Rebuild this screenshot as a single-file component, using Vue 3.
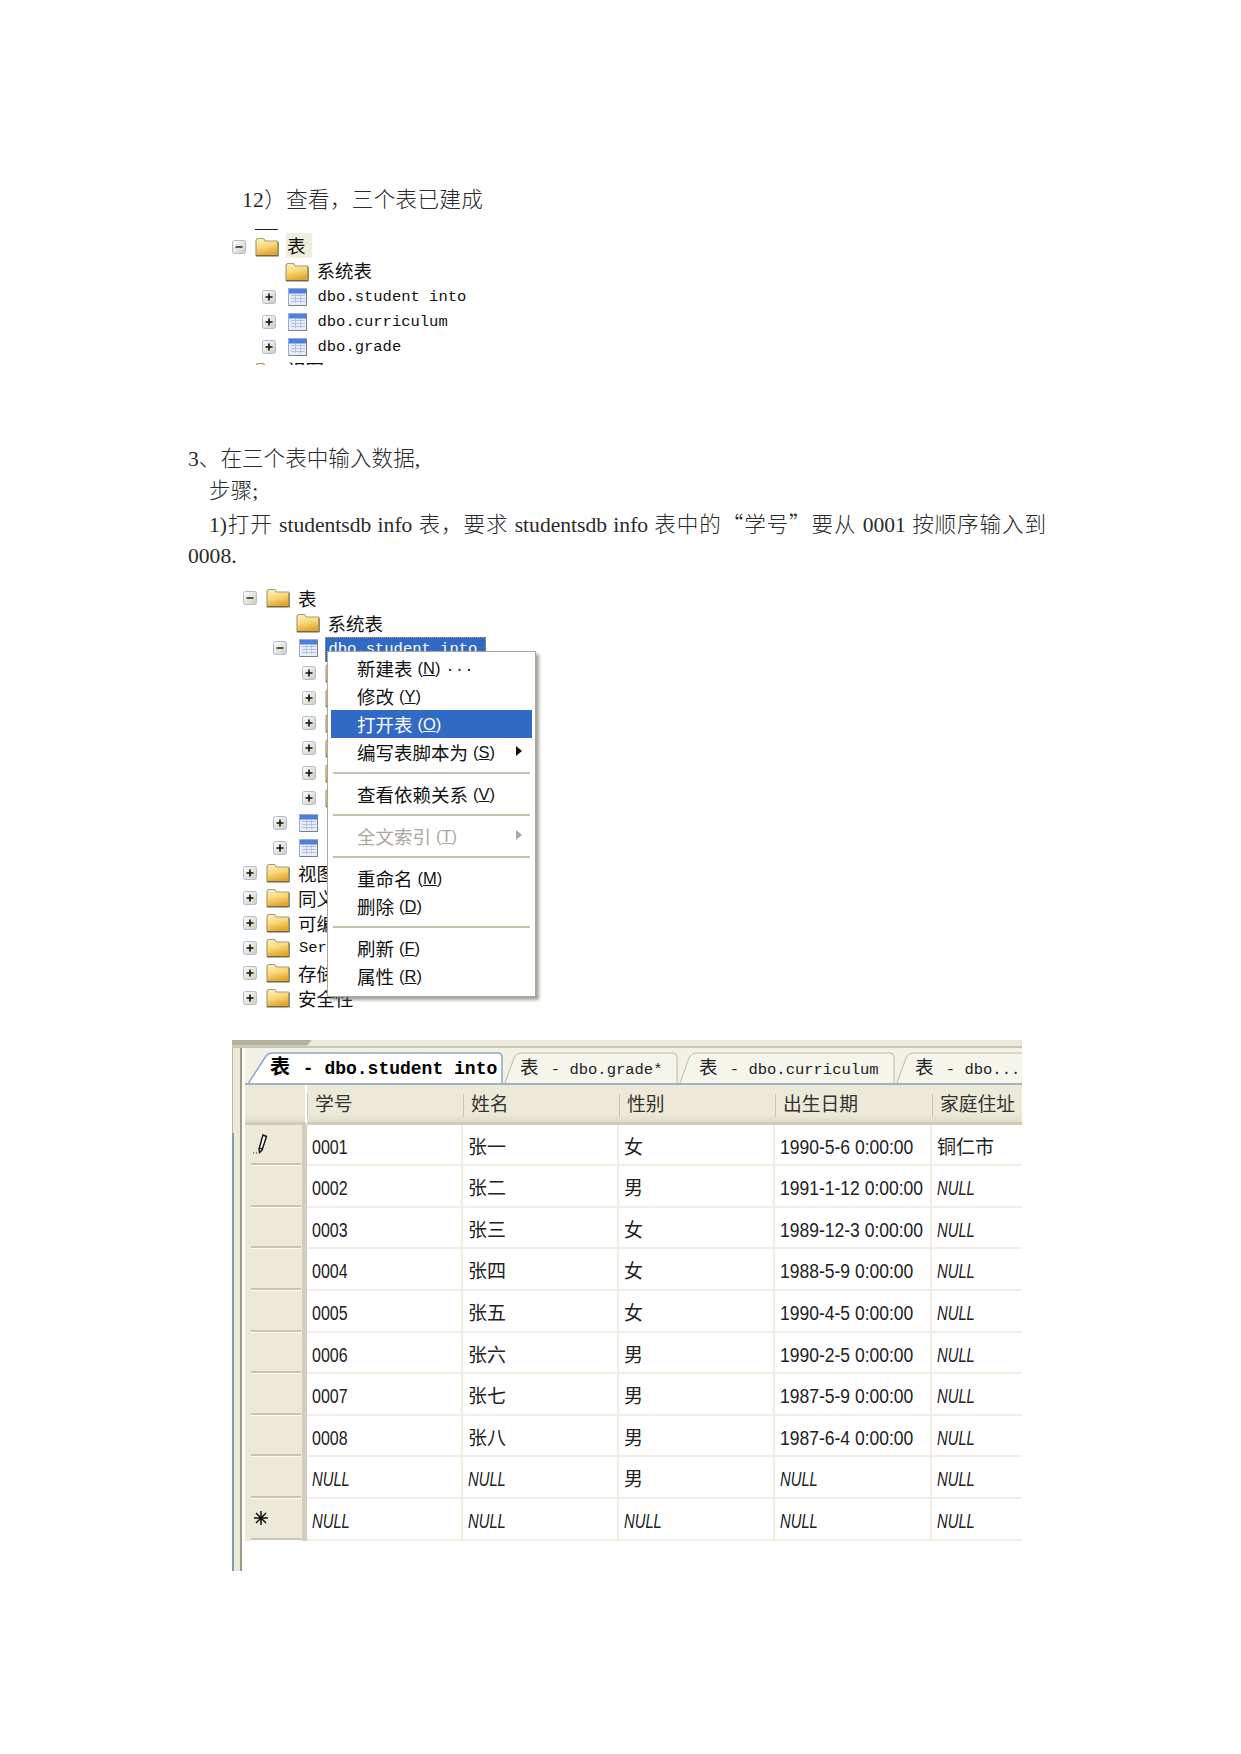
<script setup>
const tree1 = [
  { level: 0, exp: 'minus', icon: 'folder', label: '表', cjk: true, hot: true },
  { level: 1, exp: '', icon: 'folder', label: '系统表', cjk: true },
  { level: 1, exp: 'plus', icon: 'table', label: 'dbo.student into' },
  { level: 1, exp: 'plus', icon: 'table', label: 'dbo.curriculum' },
  { level: 1, exp: 'plus', icon: 'table', label: 'dbo.grade' },
  { level: 0, exp: 'plus', icon: 'folder', label: '视图', cjk: true }
]
const tree2 = [
  { level: 0, exp: 'minus', icon: 'folder', label: '表', cjk: true },
  { level: 1, exp: '', icon: 'folder', label: '系统表', cjk: true },
  { level: 1, exp: 'minus', icon: 'table', label: 'dbo.student into', selected: true },
  { level: 2, exp: 'plus', icon: 'folder', label: '列', cjk: true },
  { level: 2, exp: 'plus', icon: 'folder', label: '键', cjk: true },
  { level: 2, exp: 'plus', icon: 'folder', label: '约束', cjk: true },
  { level: 2, exp: 'plus', icon: 'folder', label: '触发器', cjk: true },
  { level: 2, exp: 'plus', icon: 'folder', label: '索引', cjk: true },
  { level: 2, exp: 'plus', icon: 'folder', label: '统计信息', cjk: true },
  { level: 1, exp: 'plus', icon: 'table', label: 'dbo.curriculum' },
  { level: 1, exp: 'plus', icon: 'table', label: 'dbo.grade' },
  { level: 0, exp: 'plus', icon: 'folder', label: '视图', cjk: true },
  { level: 0, exp: 'plus', icon: 'folder', label: '同义词', cjk: true },
  { level: 0, exp: 'plus', icon: 'folder', label: '可编程性', cjk: true },
  { level: 0, exp: 'plus', icon: 'folder', label: 'Service Broker' },
  { level: 0, exp: 'plus', icon: 'folder', label: '存储', cjk: true },
  { level: 0, exp: 'plus', icon: 'folder', label: '安全性', cjk: true }
]
const menu = [
  { text: '新建表', key: 'N', tail: '...' },
  { text: '修改', key: 'Y' },
  { text: '打开表', key: 'O', active: true },
  { text: '编写表脚本为', key: 'S', arrow: true },
  { sep: true },
  { text: '查看依赖关系', key: 'V' },
  { sep: true },
  { text: '全文索引', key: 'T', arrow: true, disabled: true },
  { sep: true },
  { text: '重命名', key: 'M' },
  { text: '删除', key: 'D' },
  { sep: true },
  { text: '刷新', key: 'F' },
  { text: '属性', key: 'R' }
]
const tabs = [
  { name: 'dbo.student into', active: true, w: 255, pad: 22 },
  { name: 'dbo.grade*', w: 175, pad: 17 },
  { name: 'dbo.curriculum', w: 217, pad: 21 },
  { name: 'dbo...', w: 140, pad: 20 }
]
function tabPath(t) {
  const r = t.w - 1
  const start = t.active ? 'M0.5 31 L18 4 Q20 1 25 1' : 'M2 31 L11 6 Q13 1 20 1'
  return `${start} H${r - 4} Q${r} 1 ${r} 5 V31`
}
const headers = ['学号', '姓名', '性别', '出生日期', '家庭住址']
const rows = [
  ['0001', '张一', '女', '1990-5-6 0:00:00', '铜仁市'],
  ['0002', '张二', '男', '1991-1-12 0:00:00', 'NULL'],
  ['0003', '张三', '女', '1989-12-3 0:00:00', 'NULL'],
  ['0004', '张四', '女', '1988-5-9 0:00:00', 'NULL'],
  ['0005', '张五', '女', '1990-4-5 0:00:00', 'NULL'],
  ['0006', '张六', '男', '1990-2-5 0:00:00', 'NULL'],
  ['0007', '张七', '男', '1987-5-9 0:00:00', 'NULL'],
  ['0008', '张八', '男', '1987-6-4 0:00:00', 'NULL'],
  ['NULL', 'NULL', '男', 'NULL', 'NULL'],
  ['NULL', 'NULL', 'NULL', 'NULL', 'NULL']
]
function kind(v, i) {
  if (v === 'NULL') return 'null'
  if (i === 0) return 'num'
  if (i === 3) return 'date'
  return 'cjk'
}
</script>

<template>
  <div class="page">
    <svg class="defs" width="0" height="0" aria-hidden="true">
      <defs>
        <linearGradient id="gold" x1="0" y1="0" x2="0.3" y2="1">
          <stop offset="0" stop-color="#fdf3c4" />
          <stop offset="0.55" stop-color="#f8d776" />
          <stop offset="1" stop-color="#e2a72e" />
        </linearGradient>
        <linearGradient id="btn" x1="0" y1="0" x2="1" y2="1">
          <stop offset="0" stop-color="#ffffff" />
          <stop offset="1" stop-color="#cfcbb8" />
        </linearGradient>
        <symbol id="folder" viewBox="0 0 24 20">
          <path d="M1 18.5V3.2L2.4 1.5H8.5L10.5 4H22.5L23 5V18.5Z" fill="url(#gold)" stroke="#a89c78" stroke-width="1.2" />
          <path d="M1 18.8H23.4" stroke="#6e654a" stroke-width="1.4" />
          <path d="M23.2 5V19" stroke="#8a7d58" stroke-width="1.2" />
        </symbol>
        <symbol id="table" viewBox="0 0 19 18">
          <rect x="0.5" y="0.5" width="18" height="17" fill="#e6ecf8" stroke="#98acd0" />
          <rect x="1" y="1" width="17" height="4.5" fill="#4d7fe0" />
          <path d="M3 7.5H17M3 10.5H17M3 13.5H17M7.5 6V15M12.5 6V15" stroke="#b4c2dc" stroke-width="1" fill="none" />
          <path d="M18.5 1V17.5H1" stroke="#767f90" stroke-width="1" fill="none" />
        </symbol>
        <symbol id="plus" viewBox="0 0 14 14">
          <rect x="0.5" y="0.5" width="13" height="13" rx="2" fill="url(#btn)" stroke="#a9bfd6" />
          <path d="M3.5 7H10.5M7 3.5V10.5" stroke="#111" stroke-width="1.6" />
        </symbol>
        <symbol id="minus" viewBox="0 0 14 14">
          <rect x="0.5" y="0.5" width="13" height="13" rx="2" fill="url(#btn)" stroke="#a9bfd6" />
          <path d="M3.5 7H10.5" stroke="#333" stroke-width="1.6" />
        </symbol>
      </defs>
    </svg>

    <p class="body heading">12）查看，三个表已建成</p>

    <div class="tree tree-one">
      <div class="tree-edge"></div>
      <div v-for="(r, i) in tree1" :key="i" class="row" :class="'lv' + r.level">
        <svg v-if="r.exp" class="exp"><use :href="'#' + r.exp" /></svg>
        <span v-else class="exp"></span>
        <svg :class="r.icon"><use :href="'#' + r.icon" /></svg>
        <span class="label" :class="{ cjk: r.cjk, mono: !r.cjk, hot: r.hot }">{{ r.label }}</span>
      </div>
    </div>

    <div class="body para">
      <div>3、在三个表中输入数据,</div>
      <div class="ind">步骤;</div>
      <div class="ind just">1)打开 studentsdb info 表，要求 studentsdb info 表中的<span class="q">“</span>学号<span class="q">”</span>要从 0001 按顺序输入到</div>
      <div>0008.</div>
    </div>

    <div class="tree tree-two">
      <div v-for="(r, i) in tree2" :key="i" class="row" :class="'lv' + r.level">
        <svg v-if="r.exp" class="exp"><use :href="'#' + r.exp" /></svg>
        <span v-else class="exp"></span>
        <svg :class="r.icon"><use :href="'#' + r.icon" /></svg>
        <span class="label" :class="{ cjk: r.cjk, mono: !r.cjk, sel: r.selected }">{{ r.label }}</span>
      </div>

      <div class="menu">
        <template v-for="(m, i) in menu" :key="i">
          <div v-if="m.sep" class="sep"></div>
          <div v-else class="item" :class="{ active: m.active, disabled: m.disabled }">
            <span class="item-text">{{ m.text }}</span>
            <span class="item-key">(<u>{{ m.key }}</u>)</span>
            <span v-if="m.tail" class="item-tail">...</span>
            <span v-if="m.arrow" class="arrow"></span>
          </div>
        </template>
      </div>
    </div>

    <div class="grid-window">
      <div class="top-strip"><span class="top-dark"></span></div>
      <div class="window-body">
        <div class="side">
          <div class="side-top"></div>
          <div class="side-bottom"></div>
        </div>
        <div class="main">
          <div class="tabbar">
            <div
              v-for="(t, i) in tabs"
              :key="i"
              class="tab"
              :class="{ on: t.active }"
              :style="{ width: t.w + 'px', paddingLeft: t.pad + 'px' }"
            >
              <svg class="tab-shape" :width="t.w" height="32"><path :d="tabPath(t)" /></svg>
              <span class="tab-cjk">表</span><span class="tab-text"> - {{ t.name }}</span>
            </div>
          </div>
          <div class="grid">
            <div class="head corner"></div>
            <div v-for="h in headers" :key="h" class="head"><span>{{ h }}</span></div>
            <template v-for="(r, ri) in rows" :key="ri">
              <div class="rowhead">
                <svg v-if="ri === 0" class="pencil" viewBox="0 0 20 24">
                  <path d="M11 3L14.5 4.5L10 18L7.5 20.5L7 17Z" fill="#fff" stroke="#111" stroke-width="1.4" />
                  <path d="M8 16L11 17.5" stroke="#111" stroke-width="1.2" />
                  <path d="M1 21H2.2M4 21H5.2" stroke="#333" stroke-width="1.2" />
                </svg>
                <svg v-if="ri === 9" class="star" viewBox="0 0 16 16">
                  <path d="M8 1V15M1 8H15M3 3L13 13M13 3L3 13" stroke="#111" stroke-width="1.5" />
                </svg>
              </div>
              <div v-for="(v, ci) in r" :key="ci" class="cell" :class="{ last: ci === 4 }">
                <span :class="kind(v, ci)">{{ v }}</span>
              </div>
            </template>
          </div>
        </div>
      </div>
    </div>
  </div>
</template>

<style scoped>
.page {
  position: relative;
  box-sizing: border-box;
  width: 1241px;
  height: 1754px;
  padding: 184px 0 0 188px;
  overflow: hidden;
  background: #fff;
  color: #111;
}
.defs { position: absolute; }
.body {
  font-family: "Liberation Serif", "Noto Sans CJK SC", serif;
  font-size: 21.6px;
  font-weight: 300;
  line-height: 32.4px;
  color: #2a2a2a;
  white-space: nowrap;
}
.heading { margin: 0 0 0 54px; height: 32px; letter-spacing: 0.3px; }
.para { margin-top: 78px; }
.para > div { height: 32.4px; }
.ind { padding-left: 21px; }
.just {
  width: 837px;
  white-space: normal;
  text-align: justify;
  text-align-last: justify;
  position: relative;
  top: -1px;
}
.q { font-family: "Noto Sans CJK SC", sans-serif; }

.tree { position: relative; }
.tree-one {
  margin: 13px 0 0 44px;
  height: 136px;
  overflow: hidden;
}
.tree-one .cjk { position: relative; top: -1px; }
.tree-one .mono { position: relative; top: 1px; }
.tree-edge {
  width: 23px;
  height: 1px;
  margin-left: 23px;
  margin-bottom: 4px;
  background: #222;
}
.tree-two { margin: 13px 0 0 55px; }
.row {
  display: flex;
  align-items: center;
  height: 25px;
  white-space: nowrap;
}
.lv1 { padding-left: 29.5px; }
.lv2 { padding-left: 59px; }
.exp {
  flex: none;
  width: 14px;
  height: 14px;
  margin-right: 9px;
}
.folder {
  flex: none;
  width: 24px;
  height: 20px;
  margin-right: 8px;
}
.table {
  flex: none;
  width: 19px;
  height: 18px;
  margin: 0 10px 0 3px;
}
.label { line-height: 25px; }
.cjk { font: 18.5px/25px "Noto Sans CJK SC", sans-serif; }
.mono { font: 15.5px/25px "Liberation Mono", "Noto Sans CJK SC", monospace; margin-left: 1px; }
.hot { background: #f0eedf; margin-left: -1px; padding: 0 6px 0 1px; }
.sel {
  position: relative;
  top: 1px;
  margin-left: -3px;
  padding: 0 9px 0 4px;
  background: #316ac5;
  color: #fff;
  outline: 1px dotted #c9a24a;
  outline-offset: -1px;
}

.menu {
  position: absolute;
  left: 84px;
  top: 65px;
  box-sizing: border-box;
  width: 209px;
  height: 346px;
  padding: 2px 3px;
  background: #fff;
  border: 1px solid #aca899;
  box-shadow: 3px 3px 3px rgba(90, 90, 80, 0.55);
  z-index: 2;
}
.item {
  position: relative;
  display: flex;
  align-items: center;
  height: 28px;
  padding-left: 26px;
  white-space: nowrap;
}
.item-text { font: 18.5px/28px "Noto Sans CJK SC", sans-serif; }
.item-key { margin-left: 5px; font: 16.5px/28px "Liberation Sans", sans-serif; }
.item-tail { margin-left: 5px; font: 15px/28px "Liberation Mono", monospace; letter-spacing: 0.5px; }
.active { background: #316ac5; color: #fff; }
.disabled { color: #aca899; }
.arrow {
  position: absolute;
  left: 185px;
  top: 8px;
  border-left: 6px solid #111;
  border-top: 5px solid transparent;
  border-bottom: 5px solid transparent;
}
.disabled .arrow { border-left-color: #aca899; }
.sep {
  height: 2px;
  margin: 6px 2px;
  background: #c4c1ae;
}

.grid-window {
  margin: 29px 0 0 44px;
  width: 790px;
  height: 531px;
  display: flex;
  flex-direction: column;
}
.top-strip {
  flex: none;
  height: 6px;
  background: #ebe9dc;
  border-bottom: 2px solid #c8c6b4;
}
.top-dark {
  display: block;
  width: 80px;
  height: 6px;
  background: #b3b19d;
  clip-path: polygon(0 0, 100% 0, 94% 100%, 0 100%);
}
.window-body { flex: 1; display: flex; min-height: 0; }
.side {
  flex: none;
  width: 13px;
  display: flex;
  flex-direction: column;
}
.side-top {
  height: 85px;
  background: #ece9d8;
  border-left: 1px solid #b9b7a4;
  border-right: 2px solid #9d9b88;
  box-sizing: border-box;
  margin-right: 3px;
}
.side-bottom {
  flex: 1;
  background: #ece9d8;
  border-left: 2px solid #7f9db9;
  border-right: 2px solid #9d9b88;
  box-sizing: border-box;
  margin-right: 3px;
}
.main { flex: 1; min-width: 0; }
.tabbar {
  display: flex;
  height: 37px;
  padding: 4px 0 0 3px;
  box-sizing: border-box;
  background: #f3f1e6;
  border-bottom: 2px solid #9fb2c6;
  overflow: hidden;
}
.tab {
  position: relative;
  box-sizing: border-box;
  flex: none;
  height: 31px;
  line-height: 28px;
  white-space: nowrap;
  color: #222;
}
.tab-shape {
  position: absolute;
  left: 0;
  top: 0;
}
.tab-shape path {
  fill: #f6f5ec;
  stroke: #bdbaa6;
  stroke-width: 1;
}
.on .tab-shape path {
  fill: #fff;
  stroke: #8aa7c8;
  stroke-width: 1.5;
}
.tab-cjk {
  position: relative;
  font-family: "Noto Sans CJK SC", sans-serif;
  font-size: 18.5px;
}
.tab-text {
  position: relative;
  margin-left: 3px;
  font-family: "Liberation Mono", monospace;
  font-size: 15.5px;
  white-space: pre;
}
.on { color: #000; font-weight: 700; }
.on .tab-cjk { font-size: 20px; }
.on .tab-text { font-size: 18px; margin-left: 2px; }
.grid {
  display: grid;
  grid-template-columns: 62px 156px 156px 156px 157px 90px;
  grid-template-rows: 40px repeat(10, 41.6px);
}
.head {
  position: relative;
  box-sizing: border-box;
  padding-left: 8px;
  background: linear-gradient(#ece9d8 80%, #dedbc8);
  border-bottom: 3px solid #cfcbb6;
  font: 18.8px/36px "Noto Sans CJK SC", sans-serif;
  color: #333;
  white-space: nowrap;
  overflow: hidden;
}
.head::before {
  content: "";
  position: absolute;
  left: 0;
  top: 9px;
  height: 23px;
  width: 1px;
  background: #c8c5b0;
}
.corner::before { display: none; }
.corner { border-right: 2px solid #fff; }
.rowhead {
  position: relative;
  box-sizing: border-box;
  background: #ece9d8;
  border-right: 5px solid #d2cebb;
}
.rowhead::after {
  content: "";
  position: absolute;
  left: 6px;
  right: 1px;
  bottom: 0;
  height: 2px;
  background: #c9c5b0;
  border-bottom: 1px solid #fff;
}
.pencil {
  position: absolute;
  left: 7px;
  top: 7px;
  width: 20px;
  height: 24px;
}
.star {
  position: absolute;
  left: 8px;
  top: 11px;
  width: 16px;
  height: 16px;
}
.cell {
  box-sizing: border-box;
  padding-left: 5px;
  border-right: 2px solid #f1efe2;
  border-bottom: 2px solid #f1efe2;
  line-height: 42px;
  white-space: nowrap;
  overflow: hidden;
  color: #222;
}
.cell.last { border-right: none; }
.cell span { display: inline-block; transform-origin: left center; }
.num {
  font: 20px/44px "Liberation Sans", sans-serif;
  transform: scaleX(0.8);
}
.date {
  font: 20px/44px "Liberation Sans", sans-serif;
  transform: scaleX(0.875);
}
.null {
  font: italic 20px/44px "Liberation Sans", sans-serif;
  transform: scaleX(0.74);
}
.cell .cjk { font: 19px/42px "Noto Sans CJK SC", sans-serif; }
</style>

<style>
html, body { margin: 0; background: #fff; }
</style>
